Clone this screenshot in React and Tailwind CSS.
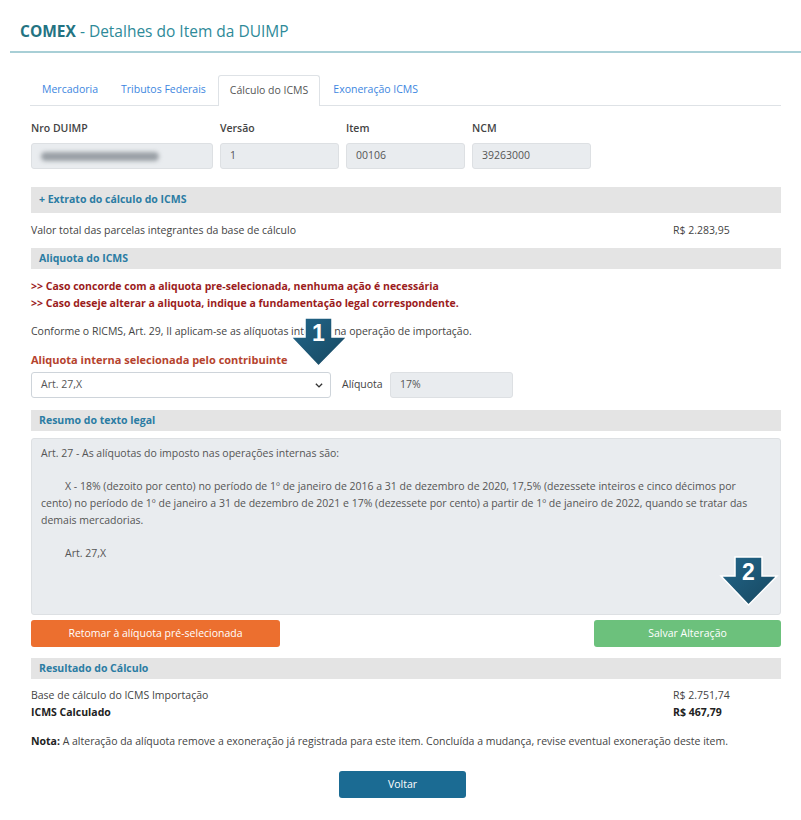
import React from 'react';

const Arrow = ({ n }) => (
  <svg width="60" height="51" viewBox="0 0 60 51">
    <defs>
      <linearGradient id={`ag${n}`} x1="0" y1="0" x2="1" y2="1">
        <stop offset="0" stopColor="#22668a" />
        <stop offset="1" stopColor="#17475f" />
      </linearGradient>
    </defs>
    <polygon points="16,1 43,1 43,20 58,20 29.5,49 2,20 16,20" fill={`url(#ag${n})`} stroke="#ffffff" strokeWidth="1.5" />
    <text x="29.5" y="24" textAnchor="middle" fill="#ffffff" fontSize="23" fontWeight="700" fontFamily="'Liberation Sans', Arial, sans-serif">{n}</text>
  </svg>
);

const SectionBar = ({ children, tall }) => (
  <div className={`bg-[#e4e4e4] flex items-center px-2 font-bold text-[#2b7ca3] ${tall ? 'h-[26px]' : 'h-[21px]'}`}>
    {children}
  </div>
);

const Field = ({ label, value, w }) => (
  <div className="flex flex-col">
    <span className="font-semibold text-[#444] h-[14px] leading-[14px]">{label}</span>
    <div className={`mt-[8px] h-[26px] ${w} bg-[#e9ecef] border border-[#dde0e3] rounded-[3px] flex items-center px-[9px] text-[#555]`}>
      {value}
    </div>
  </div>
);

const App = () => {
  return (
    <div className="w-[801px] min-h-[820px] bg-white text-[10.5px] text-[#444]" style={{ fontFamily: "'Open Sans', 'Noto Sans', sans-serif" }}>
      {/* header */}
      <div className="pl-[20px] pt-[20px] pb-[9px] ml-[10px] border-b-2 border-[#a8cfd6] h-[53px]">
        <h1 className="text-[15.5px] leading-[22px] text-[#2e8a99] -ml-[10px]">
          <span className="font-bold text-[#237382]">COMEX</span> - Detalhes do Item da DUIMP
        </h1>
      </div>

      <div className="pl-[31px] pr-[20px] pt-[22px] relative">
        {/* tabs */}
        <div className="flex border-b border-[#dee2e6] h-[31px] items-end -ml-[1px]">
          <div className="h-[30px] flex items-center pl-[12px] pr-[11px] text-[#3d86e0]">Mercadoria</div>
          <div className="h-[30px] flex items-center px-[12px] text-[#3d86e0]">Tributos Federais</div>
          <div className="h-[31px] flex items-center px-[11px] border border-b-0 border-[#dee2e6] rounded-t-[3px] bg-white text-[#555] -mb-px">Cálculo do ICMS</div>
          <div className="h-[30px] flex items-center px-[13px] text-[#3d86e0]">Exoneração ICMS</div>
        </div>

        {/* fields */}
        <div className="mt-[15px] flex gap-[7px]">
          <Field label="Nro DUIMP" w="w-[182px]" value={<span className="block w-[118px] h-[9px] rounded-full bg-[#9aa0a6] blur-[2px]" />} />
          <Field label="Versão" w="w-[119px]" value="1" />
          <Field label="Item" w="w-[119px]" value="00106" />
          <Field label="NCM" w="w-[119px]" value="39263000" />
        </div>

        <div className="mt-[18px]">
          <SectionBar tall>+ Extrato do cálculo do ICMS</SectionBar>
        </div>
        <div className="flex h-[35px] items-center">
          <span className="flex-1">Valor total das parcelas integrantes da base de cálculo</span>
          <span className="w-[108px]">R$ 2.283,95</span>
        </div>

        <SectionBar>Aliquota do ICMS</SectionBar>
        <div className="mt-[9px] font-bold text-[#9b1c1c] leading-[17px]">
          <p>&gt;&gt; Caso concorde com a aliquota pre-selecionada, nenhuma ação é necessária</p>
          <p>&gt;&gt; Caso deseje alterar a aliquota, indique a fundamentação legal correspondente.</p>
        </div>
        <p className="mt-[11px] leading-[16px]">Conforme o RICMS, Art. 29, II aplicam-se as alíquotas internas na operação de importação.</p>
        <p className="mt-[13px] leading-[16px] font-bold text-[11px] text-[#b5432e]">Aliquota interna selecionada pelo contribuinte</p>

        <div className="mt-[4px] flex items-center">
          <div className="w-[300px] h-[26px] border border-[#ced4da] rounded-[3px] bg-white flex items-center justify-between pl-[9px] pr-[6px] text-[#555]">
            <span>Art. 27,X</span>
            <svg width="10" height="10" viewBox="0 0 16 16"><path d="M3 6l5 5 5-5" fill="none" stroke="#333" strokeWidth="2.2" /></svg>
          </div>
          <span className="ml-[11px] w-[48px]">Alíquota</span>
          <div className="w-[123px] h-[26px] bg-[#e9ecef] border border-[#dde0e3] rounded-[3px] flex items-center px-[9px] text-[#555]">17%</div>
        </div>

        <div className="absolute left-[289px] top-[264px]"><Arrow n="1" /></div>

        <div className="mt-[12px]">
          <SectionBar>Resumo do texto legal</SectionBar>
        </div>
        <div className="mt-[7px] h-[177px] bg-[#e9ecef] border border-[#dde0e3] rounded-[3px] pl-[9px] pr-[16px] pt-[6px] leading-[17px] text-[#555] relative">
          <p>Art. 27 - As alíquotas do imposto nas operações internas são:</p>
          <p className="mt-[16px] indent-[24px]">X - 18% (dezoito por cento) no período de 1º de janeiro de 2016 a 31 de dezembro de 2020, 17,5% (dezessete inteiros e cinco décimos por cento) no período de 1º de janeiro a 31 de dezembro de 2021 e 17% (dezessete por cento) a partir de 1º de janeiro de 2022, quando se tratar das demais mercadorias.</p>
          <p className="mt-[16px] pl-[24px]">Art. 27,X</p>
          <div className="absolute right-[1px] top-[117px]"><Arrow n="2" /></div>
        </div>

        <div className="mt-[5px] flex justify-between">
          <button className="w-[249px] h-[27px] bg-[#ec6f2f] text-white rounded-[3px]">Retomar à alíquota pré-selecionada</button>
          <button className="w-[187px] h-[27px] bg-[#6cc17c] text-white rounded-[3px]">Salvar Alteração</button>
        </div>

        <div className="mt-[11px]">
          <SectionBar>Resultado do Cálculo</SectionBar>
        </div>
        <div className="mt-[8px] leading-[17px]">
          <div className="flex">
            <span className="flex-1">Base de cálculo do ICMS Importação</span>
            <span className="w-[108px]">R$ 2.751,74</span>
          </div>
          <div className="flex font-bold text-[#222]">
            <span className="flex-1">ICMS Calculado</span>
            <span className="w-[108px]">R$ 467,79</span>
          </div>
        </div>
        <p className="mt-[12px] leading-[16px]"><span className="font-bold text-[#222]">Nota:</span> A alteração da alíquota remove a exoneração já registrada para este item. Concluída a mudança, revise eventual exoneração deste item.</p>

        <div className="mt-[22px] flex justify-center pr-[7px]">
          <button className="w-[127px] h-[27px] bg-[#1b6b93] text-white rounded-[3px]">Voltar</button>
        </div>
      </div>
    </div>
  );
};

export default App;
